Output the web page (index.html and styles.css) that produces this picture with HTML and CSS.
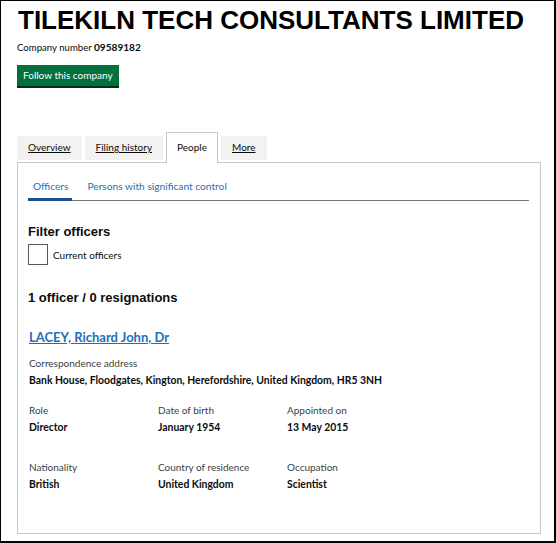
FILE: index.html
```html
<!DOCTYPE html>
<html lang="en">
<head>
<meta charset="utf-8">
<title>TILEKILN TECH CONSULTANTS LIMITED - People</title>
<link rel="stylesheet" href="styles.css">
</head>
<body>
<div class="frame">
  <h1 class="company-name">TILEKILN TECH CONSULTANTS LIMITED</h1>
  <p class="company-number">Company number <strong>09589182</strong></p>
  <a class="button" href="#">Follow this company</a>

  <div class="tabs">
    <ul class="tab-list">
      <li class="tab"><a href="#">Overview</a></li>
      <li class="tab"><a href="#">Filing history</a></li>
      <li class="tab tab-selected"><span>People</span></li>
      <li class="tab"><a href="#">More</a></li>
    </ul>
    <div class="tab-panel">
      <ul class="subtabs">
        <li class="subtab subtab-active"><a href="#">Officers</a></li>
        <li class="subtab"><a href="#">Persons with significant control</a></li>
      </ul>

      <h2 class="heading-filter">Filter officers</h2>
      <label class="checkbox">
        <span class="checkbox-box"></span>
        <span class="checkbox-label">Current officers</span>
      </label>

      <h2 class="heading-count">1 officer / 0 resignations</h2>

      <div class="appointment">
        <h3 class="officer-name"><a href="#">LACEY, Richard John, Dr</a></h3>
        <dl class="address">
          <dt>Correspondence address</dt>
          <dd>Bank House, Floodgates, Kington, Herefordshire, United Kingdom, HR5 3NH</dd>
        </dl>
        <div class="details">
          <dl class="detail"><dt>Role</dt><dd>Director</dd></dl>
          <dl class="detail"><dt>Date of birth</dt><dd>January 1954</dd></dl>
          <dl class="detail"><dt>Appointed on</dt><dd>13 May 2015</dd></dl>
          <dl class="detail"><dt>Nationality</dt><dd>British</dd></dl>
          <dl class="detail"><dt>Country of residence</dt><dd>United Kingdom</dd></dl>
          <dl class="detail"><dt>Occupation</dt><dd>Scientist</dd></dl>
        </div>
      </div>
    </div>
  </div>
</div>
</body>
</html>
```

FILE: styles.css
```css
* { box-sizing: border-box; }

html, body {
  margin: 0;
  padding: 0;
  background: #ffffff;
}

body {
  font-family: "Lato", "Liberation Sans", sans-serif;
  font-size: 10px;
  color: #0b0c0c;
}

.frame {
  width: 556px;
  height: 543px;
  border-style: solid;
  border-color: #000000;
  border-width: 1px 2px 2px 1px;
  padding: 4px 13px 0 16px;
}

.company-name {
  margin: 0 0 0 1px;
  font-family: "Liberation Sans", Arial, sans-serif;
  font-size: 26px;
  line-height: 30px;
  font-weight: bold;
  color: #000000;
}

.company-number {
  margin: 5px 0 0;
  height: 16px;
  line-height: 16px;
  font-size: 9.6px;
}

.company-number strong {
  font-weight: bold;
  font-size: 10.1px;
  line-height: 10px;
}

.button {
  display: inline-block;
  margin-top: 9px;
  height: 21px;
  line-height: 21px;
  padding: 0 6px;
  background: #00703c;
  color: #ffffff;
  text-decoration: none;
  font-size: 10px;
  box-shadow: 0 2px 0 #002d18;
}

.tabs {
  margin-top: 46px;
}

.tab-list {
  display: flex;
  align-items: flex-end;
  gap: 3px;
  list-style: none;
  margin: 0 0 -1px;
  padding: 0;
  position: relative;
  z-index: 1;
}

.tab {
  height: 24px;
  line-height: 22px;
  padding: 0 11px;
  margin-bottom: 3px;
  background: #f3f2f1;
  font-size: 10px;
}

.tab a {
  color: #0b0c0c;
  text-decoration: underline;
}

.tab-selected {
  height: 31px;
  margin-bottom: 0;
  padding: 3px 10px 0;
  background: #ffffff;
  border: 1px solid #c8c8c8;
  border-bottom: 0;
}

.tab-panel {
  border: 1px solid #c8c8c8;
  padding: 15px 11px 40px 10px;
  height: 372px;
}

.subtabs {
  display: flex;
  gap: 10px;
  list-style: none;
  margin: 0;
  padding: 0;
  border-bottom: 1px solid #767676;
  font-size: 10.2px;
}

.subtab {
  padding: 0 4px 4px 5px;
  line-height: 16px;
  border-bottom: 3px solid transparent;
  margin-bottom: -1px;
}

.subtab a {
  color: #1d70b8;
  text-decoration: none;
}

.subtab-active {
  border-bottom-color: #1d4f8a;
}

.heading-filter,
.heading-count {
  margin: 0;
  font-family: "Liberation Sans", Arial, sans-serif;
  font-size: 13px;
  line-height: 16px;
  font-weight: bold;
}

.heading-filter {
  margin-top: 23px;
}

.checkbox {
  display: flex;
  align-items: center;
  gap: 5px;
  margin-top: 4px;
}

.checkbox-box {
  width: 20px;
  height: 21px;
  border: 1px solid #505a5f;
  background: #ffffff;
}

.checkbox-label {
  font-size: 10px;
  line-height: 16px;
}

.heading-count {
  margin-top: 25px;
}

.appointment {
  padding-left: 1px;
}

.officer-name {
  margin: 22px 0 0;
  font-size: 13px;
  line-height: 18px;
  font-weight: bold;
}

.officer-name a {
  color: #1d70b8;
  text-decoration: underline;
}

dl { margin: 0; }
dd { margin: 0; }

.address {
  margin-top: 9px;
}

dt {
  font-size: 10px;
  line-height: 16px;
  color: #383f43;
}

dd {
  font-size: 10.4px;
  line-height: 16px;
  font-weight: bold;
  margin-top: 1px;
}

.details {
  display: grid;
  grid-template-columns: 129px 129px 129px;
  row-gap: 24px;
  margin-top: 14px;
}
```
